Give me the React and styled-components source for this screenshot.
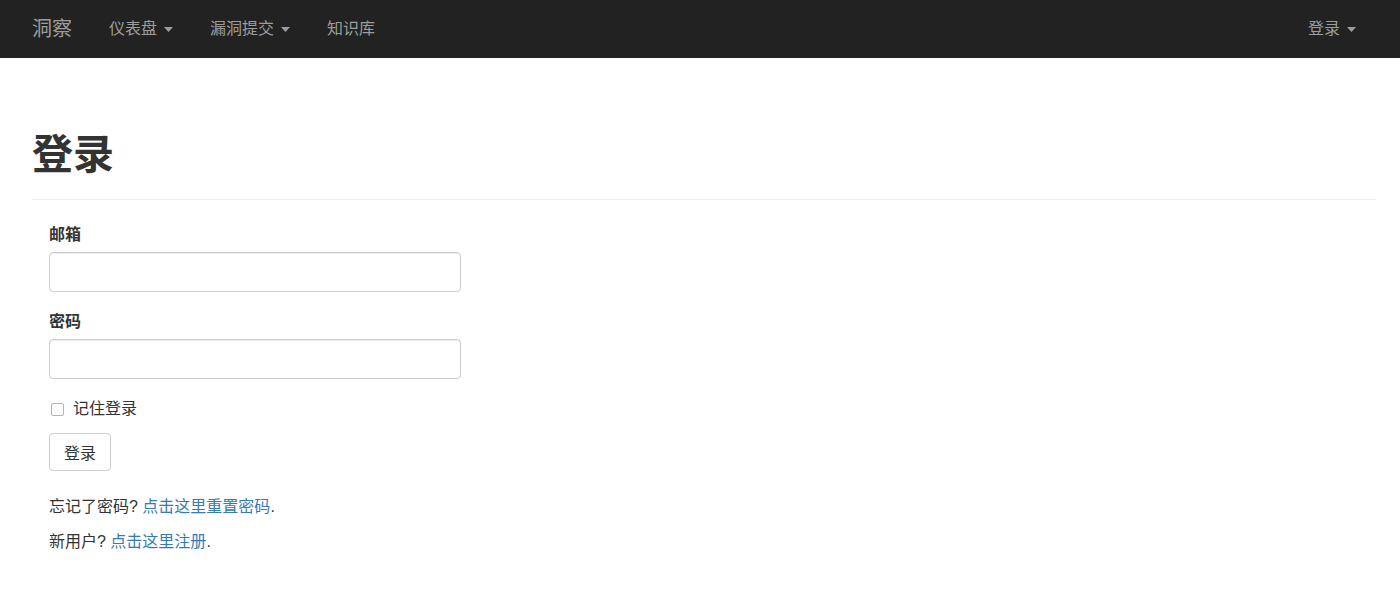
import styled, { createGlobalStyle } from "styled-components";

const GlobalStyle = createGlobalStyle`
  html, body {
    margin: 0;
    padding: 0;
    background: #fff;
  }
  body {
    font-family: "Liberation Sans", "Noto Sans CJK SC", sans-serif;
    font-size: 16px;
    color: #333;
  }
`;

const Caret = () => (
  <CaretIcon width="9" height="5" viewBox="0 0 9 5">
    <path d="M0 0 H9 L4.5 5 Z" fill="currentColor" />
  </CaretIcon>
);

const App = () => {
  return (
    <>
      <GlobalStyle />
      <Navbar>
        <Brand href="#">洞察</Brand>
        <NavList>
          <NavItem href="#">
            仪表盘 <Caret />
          </NavItem>
          <NavItem href="#">
            漏洞提交 <Caret />
          </NavItem>
          <NavItem href="#">知识库</NavItem>
        </NavList>
        <RightNav>
          <NavItem href="#">
            登录 <Caret />
          </NavItem>
        </RightNav>
      </Navbar>
      <Main>
        <PageHeader>
          <Title>登录</Title>
        </PageHeader>
        <Form onSubmit={(e) => e.preventDefault()}>
          <Group>
            <Label htmlFor="email">邮箱</Label>
            <Input id="email" type="text" />
          </Group>
          <Group>
            <Label htmlFor="password">密码</Label>
            <Input id="password" type="password" />
          </Group>
          <CheckRow>
            <Checkbox type="checkbox" id="remember" />
            <label htmlFor="remember">记住登录</label>
          </CheckRow>
          <Button type="submit">登录</Button>
        </Form>
        <Text>
          忘记了密码?&nbsp;<Link href="#">点击这里重置密码</Link>.
        </Text>
        <Text>
          新用户?&nbsp;<Link href="#">点击这里注册</Link>.
        </Text>
      </Main>
    </>
  );
};

export default App;

const Navbar = styled.nav`
  display: flex;
  align-items: center;
  height: 58px;
  background: #222;
  padding: 0 44px 0 32px;
  box-sizing: border-box;
`;

const Brand = styled.a`
  font-size: 20px;
  color: #9d9d9d;
  text-decoration: none;
  margin-right: 37px;
  line-height: 58px;
`;

const NavList = styled.div`
  display: flex;
  align-items: center;
  gap: 37px;
`;

const RightNav = styled.div`
  margin-left: auto;
  display: flex;
  align-items: center;
`;

const NavItem = styled.a`
  display: flex;
  align-items: center;
  gap: 7px;
  color: #9d9d9d;
  font-size: 16px;
  text-decoration: none;
  line-height: 58px;
`;

const CaretIcon = styled.svg`
  display: block;
  margin-top: 1px;
`;

const Main = styled.main`
  padding: 0 24px 0 32px;
`;

const PageHeader = styled.div`
  margin-top: 75px;
  padding-bottom: 21px;
  border-bottom: 1px solid #eee;
`;

const Title = styled.h1`
  margin: 0;
  font-size: 41px;
  line-height: 45px;
  font-weight: 700;
  color: #333;
`;

const Form = styled.form`
  padding-left: 17px;
  padding-top: 24px;
  width: 412px;
`;

const Group = styled.div`
  margin-bottom: 19px;
`;

const Label = styled.label`
  display: block;
  font-weight: 700;
  font-size: 16px;
  line-height: 22px;
  margin-bottom: 6px;
`;

const Input = styled.input`
  display: block;
  width: 100%;
  height: 40px;
  box-sizing: border-box;
  border: 1px solid #ccc;
  border-radius: 4px;
  padding: 6px 12px;
  font-size: 16px;
  box-shadow: inset 0 1px 1px rgba(0, 0, 0, 0.075);
  &:focus {
    outline: none;
    border-color: #66afe9;
  }
`;

const CheckRow = styled.div`
  display: flex;
  align-items: center;
  gap: 9px;
  margin-top: -1px;
  font-size: 16px;
  line-height: 24px;
  padding-left: 2px;
`;

const Checkbox = styled.input`
  appearance: none;
  margin: 0;
  width: 13px;
  height: 13px;
  border: 1px solid #b5b5b5;
  border-radius: 2px;
  background: #fff;
  box-sizing: border-box;
`;

const Button = styled.button`
  margin-top: 12px;
  height: 38px;
  padding: 0 14px;
  background: #fff;
  border: 1px solid #ccc;
  border-radius: 4px;
  font-family: inherit;
  font-size: 16px;
  color: #333;
  cursor: pointer;
`;

const Text = styled.p`
  margin: 0 0 13px 17px;
  font-size: 16px;
  line-height: 22px;
  &:first-of-type {
    margin-top: 25px;
  }
`;

const Link = styled.a`
  color: #337ab7;
  text-decoration: none;
`;
